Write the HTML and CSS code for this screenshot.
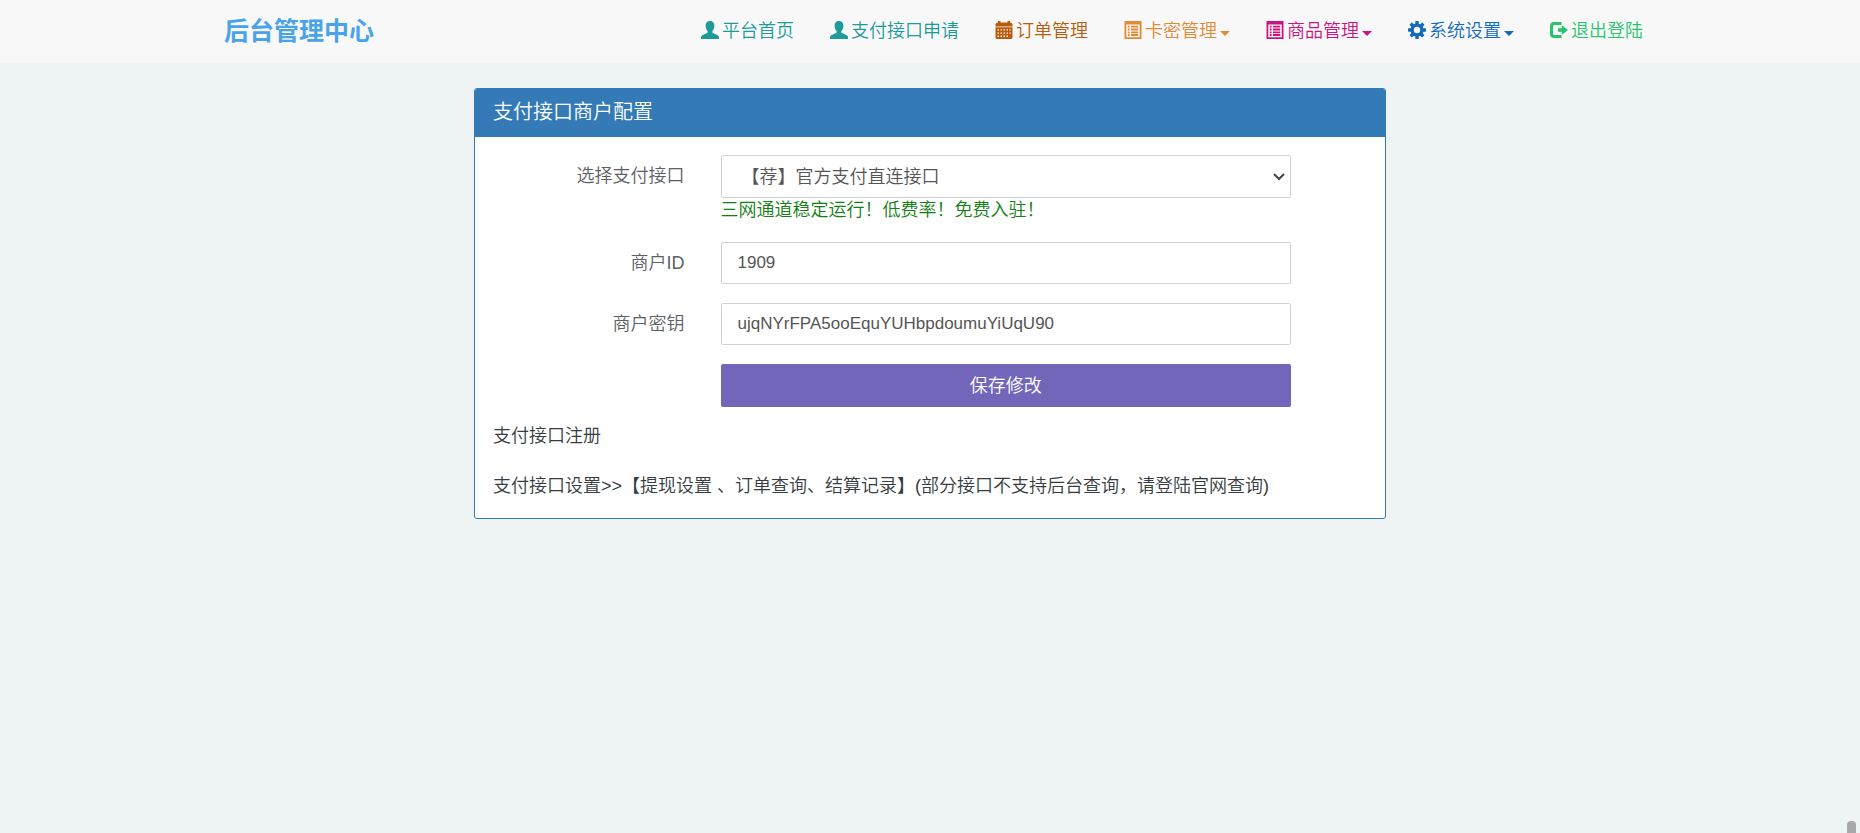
FILE: index.html
```html
<!DOCTYPE html>
<html lang="zh-CN">
<head>
<meta charset="utf-8">
<meta name="viewport" content="width=device-width, initial-scale=1">
<title>支付接口商户配置</title>
<link rel="stylesheet" href="styles.css">
</head>
<body>
<svg class="sprite" aria-hidden="true">
  <symbol id="user" viewBox="0 0 18 18"><path d="M9 0C6.2 0 4.600 1.900 4.600 4.600c0 2.300.8 4.500 2 5.600.3.900.1 1.500-.6 1.900L1.300 14.300C.4 14.800 0 15.500 0 16.500V18h18v-1.500c0-1-.4-1.700-1.300-2.200L12 12.100c-.7-.4-.9-1-.6-1.900 1.200-1.100 2-3.300 2-5.600C13.400 1.900 11.800 0 9 0z"/></symbol>
  <symbol id="calendar" viewBox="0 0 18 18"><path d="M3 0h2.500v1.500h7V0H15v1.500h1L17.500 3v2.500H.5V3L2 1.500h1z"/><path fill-rule="evenodd" d="M.5 6.300h17V17l-1 1h-15l-1-1zM2.500 8.200v1.300H4V8.200zm3 0v1.300H7V8.200zm3 0v1.300H10V8.200zm3 0v1.300H13V8.200zm3 0v1.300h1.200V8.200zM2.500 11.400v1.300H4v-1.300zm3 0v1.300H7v-1.300zm3 0v1.300H10v-1.300zm3 0v1.300H13v-1.300zm3 0v1.300h1.200v-1.300zM2.500 14.600v1.300H4v-1.300zm3 0v1.300H7v-1.300zm3 0v1.300H10v-1.300zm3 0v1.300H13v-1.300z"/></symbol>
  <symbol id="list" viewBox="0 0 18 18"><path fill-rule="evenodd" d="M.5 0h17v18H.5zM2.300 3.500v12.700h13.400V3.500z"/><path d="M3.800 4.800h1.800v1.800H3.800zM3.800 7.600h1.800v1.800H3.800zM3.800 10.400h1.800v1.800H3.800zM3.800 13.100h1.800v1.800H3.800zM7 4.800h7.200v1.800H7zM7 7.600h7.200v1.800H7zM7 10.400h7.200v1.800H7zM7 13.100h7.200v1.800H7z"/></symbol>
  <symbol id="cog" viewBox="0 0 18 18"><rect x="7.300" y="0" width="3.400" height="18" rx=".6"/><rect x="7.300" y="0" width="3.400" height="18" rx=".6" transform="rotate(45 9 9)"/><rect x="7.300" y="0" width="3.400" height="18" rx=".6" transform="rotate(90 9 9)"/><rect x="7.300" y="0" width="3.400" height="18" rx=".6" transform="rotate(135 9 9)"/><circle cx="9" cy="9" r="6.600"/><circle cx="9" cy="9" r="3.200" class="hole"/></symbol>
  <symbol id="logout" viewBox="0 0 18 18"><path d="M11.500 1H4Q0 1 0 5v8q0 4 4 4h7.500v-3H4.600Q3 14 3 12.400V5.600Q3 4 4.600 4h6.900z"/><path d="M11.800 4.200 18 9l-6.200 4.800v-3H8V7.200h3.800z"/></symbol>
</svg>
<header class="navbar">
  <div class="navbar-inner">
    <a class="brand" href="#">后台管理中心</a>
    <nav class="menu" aria-label="主导航">
      <a class="item teal" href="#"><svg class="icon" aria-hidden="true"><use href="#user"/></svg>平台首页</a>
      <a class="item teal" href="#"><svg class="icon" aria-hidden="true"><use href="#user"/></svg>支付接口申请</a>
      <a class="item rust" href="#"><svg class="icon" aria-hidden="true"><use href="#calendar"/></svg>订单管理</a>
      <a class="item orange" href="#"><svg class="icon" aria-hidden="true"><use href="#list"/></svg>卡密管理<span class="caret"></span></a>
      <a class="item pink" href="#"><svg class="icon" aria-hidden="true"><use href="#list"/></svg>商品管理<span class="caret"></span></a>
      <a class="item blue" href="#"><svg class="icon" aria-hidden="true"><use href="#cog"/></svg>系统设置<span class="caret"></span></a>
      <a class="item green" href="#"><svg class="icon" aria-hidden="true"><use href="#logout"/></svg>退出登陆</a>
    </nav>
  </div>
</header>
<main class="page">
  <section class="panel">
    <h1 class="panel-title">支付接口商户配置</h1>
    <div class="panel-body">
      <form class="form">
        <div class="row">
          <label class="label" for="gateway">选择支付接口</label>
          <div class="field">
            <div class="select-wrap">
              <select class="control" id="gateway"><option>【荐】官方支付直连接口</option></select>
              <svg class="chevron" viewBox="0 0 12 8" aria-hidden="true"><path d="M1 1l5 5 5-5"/></svg>
            </div>
            <div class="help">三网通道稳定运行！低费率！免费入驻！</div>
          </div>
        </div>
        <div class="row">
          <label class="label" for="merchant-id">商户ID</label>
          <div class="field"><input class="control" id="merchant-id" type="text" value="1909"></div>
        </div>
        <div class="row">
          <label class="label" for="merchant-key">商户密钥</label>
          <div class="field"><input class="control" id="merchant-key" type="text" value="ujqNYrFPA5ooEquYUHbpdoumuYiUqU90"></div>
        </div>
        <div class="row">
          <div class="field"><button class="save" type="button">保存修改</button></div>
        </div>
      </form>
      <div class="notes">
        <a href="#">支付接口注册</a>
        <p><a href="#">支付接口设置&gt;&gt;【提现设置 、订单查询、结算记录】</a>(部分接口不支持后台查询，请登陆官网查询)</p>
      </div>
    </div>
  </section>
</main>
<div class="scroll-thumb"></div>
</body>
</html>
```
FILE: styles.css
```css
* { box-sizing: border-box; }

body {
  margin: 0;
  min-height: 100vh;
  background: #eef3f4;
  color: #353d42;
  font: 350 18px/25px "Liberation Sans", "Noto Sans CJK SC", sans-serif;
}

a { color: inherit; text-decoration: none; }

.sprite { display: none; }

.navbar { background: #f8f8f8; }

.navbar-inner {
  display: flex;
  align-items: center;
  justify-content: space-between;
  max-width: 1426px;
  min-height: 63px;
  margin: 0 auto;
}

.brand {
  margin-left: 7px;
  color: #4aa3ea;
  font-size: 25px;
  font-weight: 700;
}

.menu { display: flex; gap: 36px; }

.item {
  display: flex;
  align-items: center;
  gap: 3px;
  white-space: nowrap;
}

.icon {
  width: 18px;
  height: 18px;
  margin-bottom: 3px;
  fill: currentColor;
}

.hole { fill: #f8f8f8; }

.caret {
  border-top: 5px solid;
  border-left: 5px solid transparent;
  border-right: 5px solid transparent;
  margin-top: 3px;
}

.teal { color: #1d9a9a; }
.rust { color: #b85c0b; }
.orange { color: #e28a35; }
.pink { color: #cc1480; }
.blue { color: #116abb; }
.green { color: #27c36d; }

.page {
  max-width: 912px;
  margin: 25px auto;
}

.panel {
  overflow: hidden;
  border: 1px solid #337ab7;
  border-radius: 3px;
  background: #fff;
}

.panel-title {
  margin: 0;
  padding: 11px 18px 12px;
  background: #337ab7;
  color: #fff;
  font-size: 20px;
  font-weight: 350;
}

.panel-body { padding: 18px 0 19px; }

.form { display: grid; gap: 19px; }

.row {
  display: grid;
  grid-template-columns: repeat(12, 1fr);
}

.label {
  grid-column: span 3;
  padding: 9px 18px 0;
  color: #5c6166;
  text-align: right;
}

.field {
  grid-column: 4 / span 8;
  padding: 0 18px;
}

.control {
  display: block;
  width: 100%;
  height: 42px;
  padding: 0 16px;
  border: 1px solid #cfd4d9;
  border-radius: 2px;
  background: #fff;
  color: #555;
  font: 350 17px "Liberation Sans", "Noto Sans CJK SC", sans-serif;
}

.select-wrap { position: relative; }

.select-wrap .control {
  height: 43px;
  padding: 0 20px;
  font-size: 18px;
  appearance: none;
}

.chevron {
  position: absolute;
  top: 18px;
  right: 6px;
  width: 12px;
  height: 8px;
  fill: none;
  stroke: #444;
  stroke-width: 2;
  pointer-events: none;
}

.help { color: #128012; }

.save {
  display: block;
  width: 100%;
  height: 43px;
  padding: 0 0 4px;
  border: 0;
  border-radius: 2px;
  background: #7266ba;
  color: #fff;
  font: 350 18px "Liberation Sans", "Noto Sans CJK SC", sans-serif;
}

.notes { padding: 17px 18px 0; }

.notes p { margin: 25px 0 0; }

.scroll-thumb {
  position: fixed;
  right: 4px;
  bottom: 0;
  width: 9px;
  height: 12px;
  border-radius: 4px 4px 0 0;
  background: #a6a8a9;
}
```
